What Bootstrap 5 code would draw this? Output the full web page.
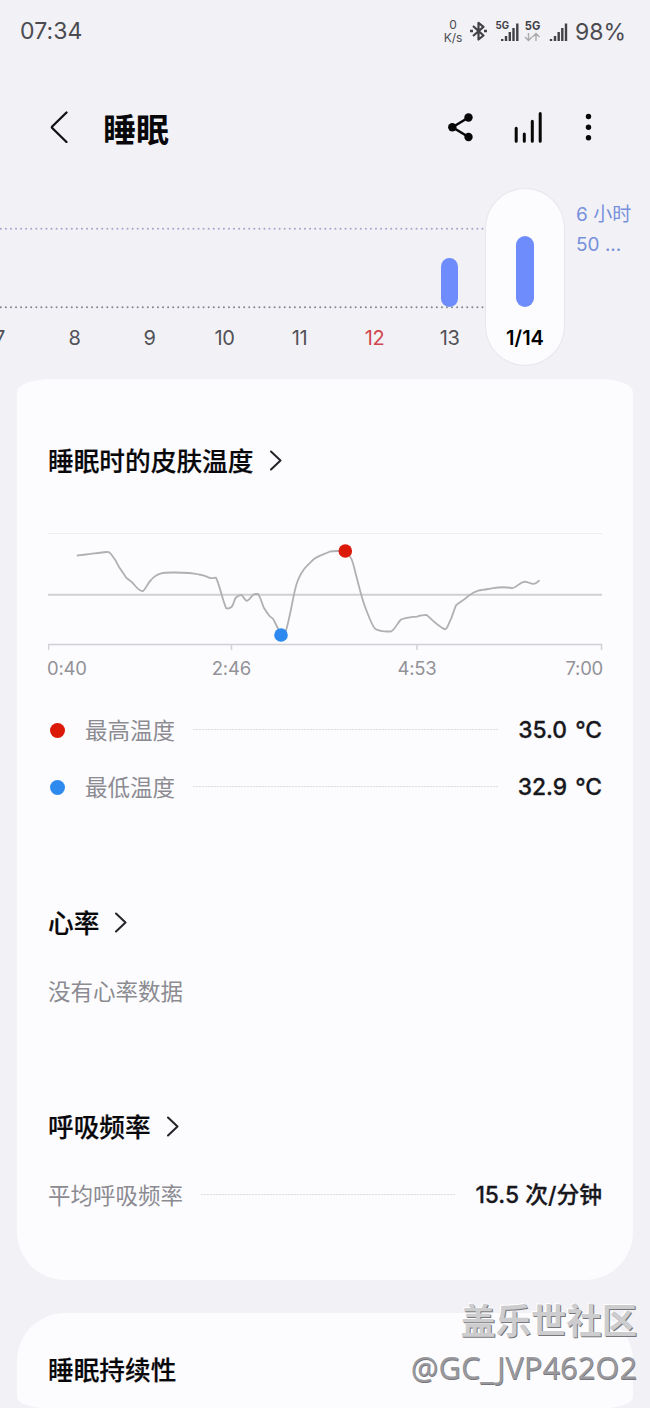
<!DOCTYPE html>
<html lang="zh-CN">
<head>
<meta charset="utf-8">
<meta name="viewport" content="width=device-width, initial-scale=1">
<title>睡眠</title>
<link rel="stylesheet" href="https://cdn.jsdelivr.net/npm/bootstrap@5.3.0/dist/css/bootstrap.min.css">
<style>
body{background:#f1f1f6;color:#08080a;font-family:Inter,"Noto Sans CJK SC",sans-serif;height:1408px;overflow:hidden;line-height:1}
svg{display:block;flex:none}
.screen{width:650px;height:1408px;overflow:hidden}
.statusbar{height:62px;padding:0 24px 0 20px;color:#4b4b50;font-size:23px}
.clock{letter-spacing:.1px}
.rate{font-size:12px;line-height:13px;width:24px;margin-right:5px;padding-bottom:1px}
.appbar{height:126px;padding:3px 50px 0 50px}
.appbar h1{font-size:33px;font-weight:700;line-height:40px;margin:7px 0 0 33px}
.week{height:191px}
.week .days{margin-left:-38px}
.day{width:75px;height:176px;margin-top:1px;flex:none;font-size:20px;letter-spacing:-.4px;color:#515156}
.track{height:118px}
.pill{width:17.5px;border-radius:9px;background:#6e8cfb}
.daylabel{line-height:24px;margin-top:19px}
.day.today{width:78px;margin-left:-1px;background:#fcfcff;border-radius:39px;box-shadow:0 0 0 1px #e6e6ec;color:#000;font-weight:600;letter-spacing:0}
.sunday{color:#d0474b}
.goal{width:74px;margin-left:12px;padding-top:12px;font-size:19px;line-height:30px;color:#7790dc;flex:none}
.panel{margin:0 17px;background:#fcfcff}
.panel-main{height:901px;border-radius:34px 34px 48px 48px/13px 13px 48px 48px;padding:64px 31px 0 31px}
.panel-next{height:95px;margin-top:33px;border-radius:48px 48px 30px 30px/48px 48px 11px 11px;padding:39px 31px 0}
h2{font-size:25.7px;font-weight:500;line-height:36px;margin:0;padding-top:1px;-webkit-text-stroke:.2px #08080a}
.more{margin-bottom:1px}
.metric{height:57px;font-size:22.5px;color:#8b8b91}
.metric strong{font-weight:500;font-size:22.8px;color:#18181c;-webkit-text-stroke:.3px #18181c;word-spacing:2px;padding-bottom:3px}
.metric .per-minute{word-spacing:0}
.swatch{width:15px;height:15px;border-radius:50%;margin:-3px 20px 0 2px}
.leader{height:1px;margin:0 20px 4px 18px;background:repeating-linear-gradient(90deg,#dedee5 0 2px,#f2f2f7 2px 3px)}
.axis{font-size:18.5px;line-height:24px;letter-spacing:-.25px;color:#929297;height:24px}
.legend-start{margin-top:23px}
.stamp{right:13px;top:1300px;z-index:2}
.stamp-name{font-size:35.300px;line-height:44px;font-weight:700;color:#cdcdd0;text-shadow:1px 1px 0 #77777b,-1px -1px 0 #fff}
.stamp-id{font-family:"Noto Sans","Open Sans",sans-serif;font-size:30.8px;line-height:46px;color:#98989d;text-shadow:.5px .5px 0 #77777c,-1px -1px 0 #fff}
</style>
</head>
<body>
<main class="screen position-relative">
<div class="statusbar d-flex align-items-center">
  <span class="clock me-auto">07:34</span>
  <span class="rate text-center">0<br>K/s</span>
  <svg width="156" height="30" viewBox="470 16 156 30" fill="none" stroke="#414146">
    <path d="M473 26l10.500 9.500-5 4V22.800l5 4L473 36" stroke-width="2.200" stroke-linejoin="round"/>
    <path d="M470 31h3M484 31h3" stroke-width="2.600"/>
    <text x="495.500" y="28.600" font-size="10" font-weight="700" textLength="13.500" lengthAdjust="spacingAndGlyphs" fill="#414146" stroke="none">5G</text>
    <path d="M502.200 41v-2M506 41v-5M509.800 41v-9M513.500 41V28M517.300 41V23.500" stroke-width="2.400"/>
    <text x="524.800" y="30" font-size="12" font-weight="700" textLength="15.500" lengthAdjust="spacingAndGlyphs" fill="#414146" stroke="none">5G</text>
    <path d="M528.500 33v7.500M525 37l3.500 3.500 3.500-3.500M536 41v-7.500M532.500 37l3.500-3.500 3.500 3.500" stroke="#aaa" stroke-width="1.400"/>
    <path d="M551 41v-2M555 41v-5M558.700 41v-9M562.300 41V28M566 41V23.500" stroke-width="2.400"/>
    <text x="575" y="39.700" font-size="23.500" textLength="51" lengthAdjust="spacingAndGlyphs" fill="#4b4b50" stroke="none">98%</text>
  </svg>
</div>
<header class="appbar d-flex align-items-center">
  <svg width="20" height="32" viewBox="0 0 20 32" fill="none" stroke="#111" stroke-width="2.300" stroke-linecap="round" stroke-linejoin="round"><path d="M16.500 1.500L2.200 15.500c-.5.500-.5 1 0 1.500l14.300 14"/></svg>
  <h1>睡眠</h1>
  <svg class="ms-auto" width="152" height="36" viewBox="448 109 152 36" fill="#080808" stroke="#080808">
    <path d="M468.500 117.500L452.500 127.300l16 9.700" fill="none" stroke-width="2.500"/><g stroke="none"><circle cx="468.500" cy="117.500" r="4.200"/><circle cx="452.300" cy="127.300" r="4.200"/><circle cx="468.500" cy="137" r="4.200"/><circle cx="588.500" cy="116.500" r="2.700"/><circle cx="588.500" cy="127.300" r="2.700"/><circle cx="588.500" cy="137.800" r="2.700"/></g>
    <path d="M516.200 128.300v13M524.300 134v7.300M532.300 121.300v20M540.200 113.500v27.800" stroke-width="3" stroke-linecap="round"/>
  </svg>
</header>
<section class="week position-relative">
  <svg class="position-absolute top-0 start-0" width="485" height="125" stroke-width="2" stroke-linecap="round" fill="none"><path d="M.8 40.700H485" stroke="#a5a5ca" stroke-dasharray=".01 5.060"/><path d="M.8 119.300H485" stroke="#85858f" stroke-dasharray=".01 5.060"/></svg>
  <div class="days d-flex position-relative">
    <div class="day text-center"><div class="track"></div><div class="daylabel">7</div></div>
    <div class="day text-center"><div class="track"></div><div class="daylabel">8</div></div>
    <div class="day text-center"><div class="track"></div><div class="daylabel">9</div></div>
    <div class="day text-center"><div class="track"></div><div class="daylabel">10</div></div>
    <div class="day text-center"><div class="track"></div><div class="daylabel">11</div></div>
    <div class="day text-center"><div class="track"></div><div class="daylabel sunday">12</div></div>
    <div class="day text-center"><div class="track d-flex align-items-end justify-content-center"><div class="pill" style="height:49px"></div></div><div class="daylabel">13</div></div>
    <div class="day today text-center"><div class="track d-flex align-items-end justify-content-center"><div class="pill" style="height:71px"></div></div><div class="daylabel">1/14</div></div>
    <div class="goal">6 小时<br>50 ...</div>
  </div>
</section>
<section class="panel panel-main">
  <div class="d-flex align-items-center gap-3"><h2>睡眠时的皮肤温度</h2><svg class="more" width="12" height="22" viewBox="0 0 12 22" fill="none" stroke="#242428" stroke-width="2" stroke-linecap="round" stroke-linejoin="round"><path d="M1 1.500L10.500 10.500 1 19.500"/></svg></div>
  <svg width="555" height="125" viewBox="48 527 555 125" fill="none" style="margin-top:47px">
    <path d="M48 533.500H602" stroke="#ededf2"/><path d="M48 594.700H602" stroke="#d0d0d3" stroke-width="2"/><path d="M48 644.500H602M48.500 644v6M231.500 644v6M417 644v6M601.500 644v6" stroke="#d0d0d5" stroke-width="1.500"/>
    <path d="M77.500 555.500C85 555 100 552.500 106 552c2 0 3-.5 5 2 4 5 6 8 8 13l7.500 11c4 3 6 4 8 7 4 5 6 6.500 8.500 6 3-2 4-7 8-11 7-8 14-7.500 24-7.500 11 0 18 .5 24 2 6 .7 8 2.500 11 3.500 3 .4 4-.3 6-.3C219 583 222 598 226 608c1 1 4 .5 6-1.500 2-3 2-7 4-9 2-2 3-2 5.500-2.500 2 1 3 5.500 5.500 5.800 4-1 4-6.500 8-6.800h3c3 4 4 10 6 14 3 5 4 6 6 8.500 4 2 4 4 5 6l4 8M285 633c2-4 3-10 5-19 3-13 4-24 8-34 5-12 10-15 16-21 6-4 10-4.500 16-7.500l14-1M347 553c5 4 6 10 8.500 20 4 15 6 25 10 35 5 13 7 19 10 21 5 3 10 2.500 15.500 2.500 4-2 6-8 10-12 5-1.500 11-2.800 16-2.800l3-1 6.500-.8c6 5 11 11 18.500 14.500 2-.5 2-2 4-6 4-8 5-14 7-18 4-4 7-4 13-10 7-5 12-5.500 20-6.500 7-1 12-3 23-.8 5-.2 7-6 13-6.500 5 .5 7 4 11 1.500l3-2.300" stroke="#b0b0b2" stroke-width="1.800" stroke-linejoin="round" stroke-linecap="round"/>
    <circle cx="281" cy="635" r="6.800" fill="#2f8af0"/><circle cx="345.300" cy="551" r="6.800" fill="#dc1809"/>
  </svg>
  <div class="axis position-relative mt-1"><span class="position-absolute start-0" style="margin-left:-1px">0:40</span><span class="position-absolute translate-middle-x" style="left:33.100%">2:46</span><span class="position-absolute translate-middle-x" style="left:66.600%">4:53</span><span class="position-absolute" style="right:-1px">7:00</span></div>
  <div class="metric legend-start d-flex align-items-center"><span class="swatch" style="background:#dc1809"></span>最高温度<span class="leader flex-grow-1"></span><strong>35.0 °C</strong></div>
  <div class="metric d-flex align-items-center"><span class="swatch" style="background:#2f8af0"></span>最低温度<span class="leader flex-grow-1"></span><strong>32.9 °C</strong></div>
  <div class="d-flex align-items-center gap-3" style="margin-top:88px"><h2>心率</h2><svg class="more" width="12" height="22" viewBox="0 0 12 22" fill="none" stroke="#242428" stroke-width="2" stroke-linecap="round" stroke-linejoin="round"><path d="M1 1.500L10.500 10.500 1 19.500"/></svg></div>
  <div class="metric d-flex align-items-center" style="margin-top:22px">没有心率数据</div>
  <div class="d-flex align-items-center gap-3" style="margin-top:88px"><h2>呼吸频率</h2><svg class="more" width="12" height="22" viewBox="0 0 12 22" fill="none" stroke="#242428" stroke-width="2" stroke-linecap="round" stroke-linejoin="round"><path d="M1 1.500L10.500 10.500 1 19.500"/></svg></div>
  <div class="metric d-flex align-items-center" style="margin-top:22px">平均呼吸频率<span class="leader flex-grow-1"></span><strong class="per-minute">15.5 次/分钟</strong></div>
</section>
<section class="panel panel-next"><h2>睡眠持续性</h2></section>
<div class="stamp position-absolute text-end"><div class="stamp-name">盖乐世社区</div><div class="stamp-id">@GC_JVP462O2</div></div>
</main>
<script src="https://cdn.jsdelivr.net/npm/bootstrap@5.3.0/dist/js/bootstrap.bundle.min.js"></script>
</body>
</html>
